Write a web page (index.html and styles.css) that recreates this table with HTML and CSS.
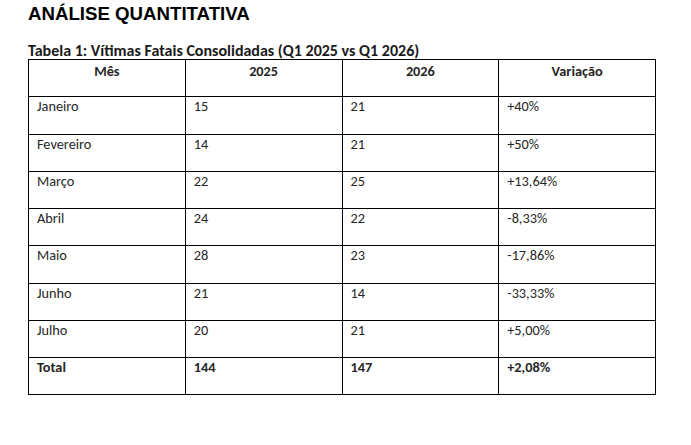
FILE: index.html
```html
<!DOCTYPE html>
<html lang="pt">
<head>
<meta charset="utf-8">
<title>Análise Quantitativa</title>
<link rel="stylesheet" href="styles.css">
</head>
<body>
<main class="page">
  <h1 class="title">ANÁLISE QUANTITATIVA</h1>
  <p class="caption">Tabela 1: Vítimas Fatais Consolidadas (Q1 2025 vs Q1 2026)</p>
  <table class="data">
    <thead>
      <tr><th>Mês</th><th>2025</th><th>2026</th><th>Variação</th></tr>
    </thead>
    <tbody>
      <tr><td>Janeiro</td><td>15</td><td>21</td><td>+40%</td></tr>
      <tr><td>Fevereiro</td><td>14</td><td>21</td><td>+50%</td></tr>
      <tr><td>Março</td><td>22</td><td>25</td><td>+13,64%</td></tr>
      <tr><td>Abril</td><td>24</td><td>22</td><td>-8,33%</td></tr>
      <tr><td>Maio</td><td>28</td><td>23</td><td>-17,86%</td></tr>
      <tr><td>Junho</td><td>21</td><td>14</td><td>-33,33%</td></tr>
      <tr><td>Julho</td><td>20</td><td>21</td><td>+5,00%</td></tr>
      <tr class="total"><td>Total</td><td>144</td><td>147</td><td>+2,08%</td></tr>
    </tbody>
  </table>
</main>
</body>
</html>
```
FILE: styles.css
```css
html, body {
  margin: 0;
  padding: 0;
  background: #ffffff;
}

.page {
  padding: 3px 36px 0 28px;
}

.title {
  margin: 0;
  font-family: "Liberation Sans", Arial, sans-serif;
  font-weight: 700;
  font-size: 18.67px;
  line-height: 22px;
  color: #000;
}

.caption {
  margin: 18px 0 0 0;
  font-family: Carlito, Lato, sans-serif;
  font-weight: 700;
  font-size: 16px;
  line-height: 16px;
  color: #1a1a1a;
}

.data {
  width: 628px;
  table-layout: fixed;
  border-collapse: collapse;
  font-family: Carlito, Lato, sans-serif;
  font-size: 14.3px;
  line-height: 16px;
  color: #262626;
}

.data th,
.data td {
  border: 1px solid #000;
  height: 37.25px;
  box-sizing: border-box;
  padding: 1px 8px 2px 8px;
  vertical-align: top;
  text-align: left;
  font-weight: 400;
}

.data th {
  text-align: center;
  font-weight: 700;
  padding-top: 3px;
}

.data .total td {
  font-weight: 700;
}
```
